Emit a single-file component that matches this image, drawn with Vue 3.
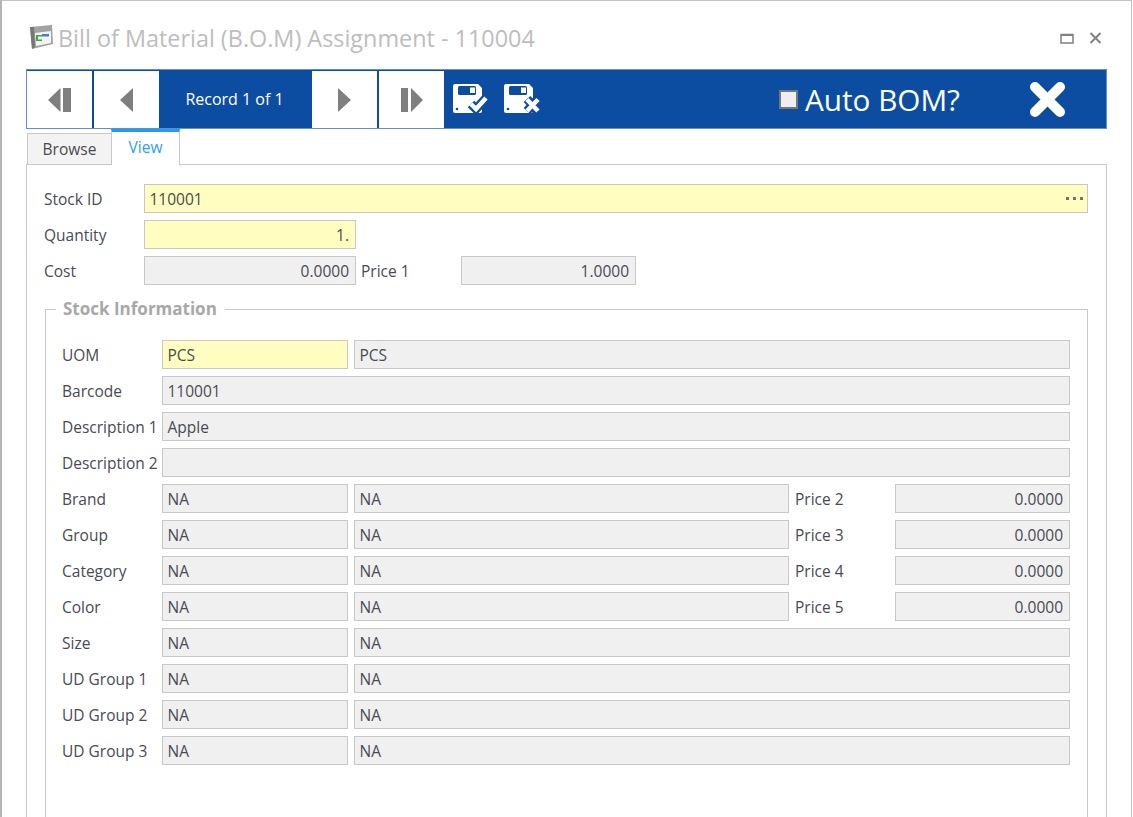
<script setup>
const rows = [
  { label: 'UOM', a: 'PCS', b: 'PCS', yellow: true },
  { label: 'Barcode', wide: '110001' },
  { label: 'Description 1', wide: 'Apple' },
  { label: 'Description 2', wide: '' },
  { label: 'Brand', a: 'NA', b: 'NA', price: 'Price 2' },
  { label: 'Group', a: 'NA', b: 'NA', price: 'Price 3' },
  { label: 'Category', a: 'NA', b: 'NA', price: 'Price 4' },
  { label: 'Color', a: 'NA', b: 'NA', price: 'Price 5' },
  { label: 'Size', a: 'NA', b: 'NA' },
  { label: 'UD Group 1', a: 'NA', b: 'NA' },
  { label: 'UD Group 2', a: 'NA', b: 'NA' },
  { label: 'UD Group 3', a: 'NA', b: 'NA' }
]
</script>

<template>
  <div class="window">
    <header class="titlebar">
      <svg class="logo" width="24" height="24" viewBox="0 0 24 24">
        <path d="M1 2 L23 0 L24 19 L3 24 Z" fill="#a2a2a2" />
        <path d="M1 2 L5 2 L6 22 L3 24 Z" fill="#777" />
        <path d="M6 8 L22 6 L22 18 L7 21 Z" fill="#f2f5f5" />
        <path d="M7 10h6v1.500H9v3h4V16H7z" fill="#37ad3c" />
        <path d="M13 9h7v2.500h-7z" fill="#3a82cc" />
      </svg>
      <h1 class="title">Bill of Material (B.O.M) Assignment - 110004</h1>
      <svg class="win-btn" width="14" height="11" viewBox="0 0 14 11">
        <path d="M1 1.500h12v8.500H1z" fill="none" stroke="#808080" stroke-width="1.500" />
        <path d="M1 2h12" stroke="#808080" stroke-width="2" />
      </svg>
      <svg class="win-close" width="13" height="12" viewBox="0 0 13 12">
        <path d="M1.500 1 L11.500 11 M11.500 1 L1.500 11" stroke="#808080" stroke-width="2" />
      </svg>
    </header>

    <div class="toolbar">
      <button class="nav">
        <svg width="23" height="24" viewBox="0 0 23 24"><path d="M12.500 0v24L0 12z" fill="#7f7f7f" /><path d="M15 0h8v24h-8z" fill="#7f7f7f" /></svg>
      </button>
      <button class="nav">
        <svg width="13" height="24" viewBox="0 0 13 24"><path d="M13 0v24L0 12z" fill="#7f7f7f" /></svg>
      </button>
      <div class="record">Record 1 of 1</div>
      <button class="nav">
        <svg width="13" height="24" viewBox="0 0 13 24"><path d="M0 0v24L13 12z" fill="#7f7f7f" /></svg>
      </button>
      <button class="nav">
        <svg width="22" height="24" viewBox="0 0 22 24"><path d="M0 0h7v24H0z" fill="#7f7f7f" /><path d="M10 0v24L22 12z" fill="#7f7f7f" /></svg>
      </button>
      <svg class="save" width="37" height="30" viewBox="0 0 37 30">
        <path d="M2 0h23l4 4v23a2 2 0 0 1-2 2H2a2 2 0 0 1-2-2V2a2 2 0 0 1 2-2z" fill="#fff" />
        <rect x="5" y="2" width="18" height="9" rx="1.500" fill="#0d4da1" />
        <rect x="17" y="3.500" width="5" height="5.500" fill="#fff" />
        <circle cx="4" cy="25" r="1.300" fill="#0d4da1" />
        <path d="M18 20l5 5 10-11" fill="none" stroke="#0d4da1" stroke-width="9" />
        <path d="M18 20l5 5 10-11" fill="none" stroke="#fff" stroke-width="4.500" />
      </svg>
      <svg class="save second" width="37" height="30" viewBox="0 0 37 30">
        <path d="M2 0h23l4 4v23a2 2 0 0 1-2 2H2a2 2 0 0 1-2-2V2a2 2 0 0 1 2-2z" fill="#fff" />
        <rect x="5" y="2" width="18" height="9" rx="1.500" fill="#0d4da1" />
        <rect x="17" y="3.500" width="5" height="5.500" fill="#fff" />
        <circle cx="4" cy="25" r="1.300" fill="#0d4da1" />
        <path d="M23 15l11 12M34 15L23 27" fill="none" stroke="#0d4da1" stroke-width="9" />
        <path d="M23 15.500l11 11.500M34 15.500L23 27" fill="none" stroke="#fff" stroke-width="4.500" />
      </svg>
      <label class="auto"><span class="check"></span>Auto BOM?</label>
      <svg class="close" width="38" height="37" viewBox="0 0 38 37">
        <path d="M6 6 L31 31 M31 6 L6 31" stroke="#fff" stroke-width="10" stroke-linecap="round" />
      </svg>
    </div>

    <nav class="tabs">
      <div class="tab">Browse</div>
      <div class="tab active">View</div>
    </nav>

    <section class="panel">
      <div class="row top">
        <span class="lbl-top">Stock ID</span>
        <div class="field yellow grow">110001<span class="dots"></span></div>
      </div>
      <div class="row top">
        <span class="lbl-top">Quantity</span>
        <div class="field yellow num w212">1.</div>
      </div>
      <div class="row top">
        <span class="lbl-top">Cost</span>
        <div class="field num w212">0.0000</div>
        <span class="lbl-price">Price 1</span>
        <div class="field num w175">1.0000</div>
      </div>

      <fieldset class="group">
        <legend>Stock Information</legend>
        <div v-for="r in rows" :key="r.label" class="row">
          <span class="lbl">{{ r.label }}</span>
          <div v-if="r.wide !== undefined" class="field grow">{{ r.wide }}</div>
          <template v-else>
            <div class="field code" :class="{ yellow: r.yellow }">{{ r.a }}</div>
            <div class="field grow">{{ r.b }}</div>
            <template v-if="r.price">
              <span class="lbl lbl-gap">{{ r.price }}</span>
              <div class="field num w175">0.0000</div>
            </template>
          </template>
        </div>
      </fieldset>
    </section>
  </div>
</template>

<style>
html, body { margin: 0; height: 100%; overflow: hidden; background: #fff; }
</style>

<style scoped>
.window {
  box-sizing: border-box;
  width: 1132px;
  height: 817px;
  overflow: hidden;
  padding: 0 24px;
  border: 1px solid #c4c4c4;
  border-left: 2px solid #b4b4b4;
  border-bottom: 0;
  background: #fff;
  font-family: "Open Sans", "Noto Sans", sans-serif;
  font-size: 15.500px;
  color: #4a4a52;
}
.titlebar { display: flex; align-items: center; box-sizing: border-box; height: 68px; padding-top: 6px; }
.logo { margin: -3px 5px 0 3px; }
.title { flex: 1; margin: 0; font-size: 23.400px; font-weight: 400; color: #bdbdbd; white-space: nowrap; }
.win-btn { margin-right: 15px; }
.win-close { margin-right: 5px; }

.toolbar {
  display: flex;
  align-items: center;
  box-sizing: border-box;
  height: 60px;
  padding: 0;
  gap: 2px;
  border: 1px solid #5f8fd0;
  background: #0d4da1;
}
.nav {
  display: flex;
  align-items: center;
  justify-content: center;
  width: 65px;
  height: 57px;
  padding: 2px 0 0;
  border: 0;
  background: #fff;
}
.record { box-sizing: border-box; width: 149px; padding-right: 2px; text-align: center; color: #fff; font-size: 16px; }
.save { margin-left: 7px; }
.save.second { margin-left: 12px; }
.auto {
  display: flex;
  align-items: center;
  margin-left: 236px;
  color: #fff;
  font-size: 29.700px;
  white-space: nowrap;
}
.check {
  box-sizing: border-box;
  width: 19px;
  height: 19px;
  margin-right: 7px;
  border: 2px solid #777;
  background: #eee;
}
.close { margin-left: 67px; }

.tabs { display: flex; height: 35px; padding-left: 1px; align-items: flex-end; }
.tab {
  box-sizing: border-box;
  width: 85px;
  height: 32px;
  margin-bottom: -1px;
  padding-top: 4px;
  text-align: center;
  background: #f3f3f3;
  border: 1px solid #c8c8c8;
  position: relative;
}
.tab.active {
  width: 69px;
  height: 36px;
  margin-left: -1px;
  border-top: 3px solid #1e9cf0;
  border-bottom: 0;
  background: #fff;
  color: #2aa0f0;
  z-index: 1;
}

.panel {
  box-sizing: border-box;
  height: 700px;
  padding: 19px 18px 0 17px;
  border: 1px solid #c8c8c8;
}
.row { display: flex; align-items: center; height: 29px; margin-bottom: 7px; }
.lbl-top { width: 100px; flex: none; }
.lbl { width: 100px; flex: none; white-space: nowrap; }
.lbl-gap { margin-left: 6px; }
.lbl-price { width: 100px; flex: none; margin-left: 5px; }
.field {
  box-sizing: border-box;
  height: 29px;
  line-height: 28px;
  padding: 0 4.500px;
  border: 1px solid #c8c8c8;
  background: #f0f0f0;
  white-space: nowrap;
}
.yellow { background: #fffec0; }
.grow { flex: 1; min-width: 0; position: relative; }
.code { width: 186px; flex: none; margin-right: 6px; }
.num { text-align: right; padding-right: 6px; }
.w212 { width: 212px; flex: none; }
.w175 { width: 175px; flex: none; }
.dots {
  position: absolute;
  right: 18px;
  top: 12px;
  width: 3px;
  height: 3px;
  background: #737373;
  box-shadow: 7px 0 #737373, 14px 0 #737373;
}

.group {
  box-sizing: border-box;
  height: 600px;
  margin: 14px 0 0 1px;
  padding: 21px 17px 0 16px;
  border: 1px solid #c8c8c8;
  min-width: 0;
}
.group legend {
  margin-left: -6px;
  padding: 0 8px 0 7px;
  font-weight: 700;
  font-size: 17px;
  color: #a8a8a8;
  line-height: 20px;
}
</style>
